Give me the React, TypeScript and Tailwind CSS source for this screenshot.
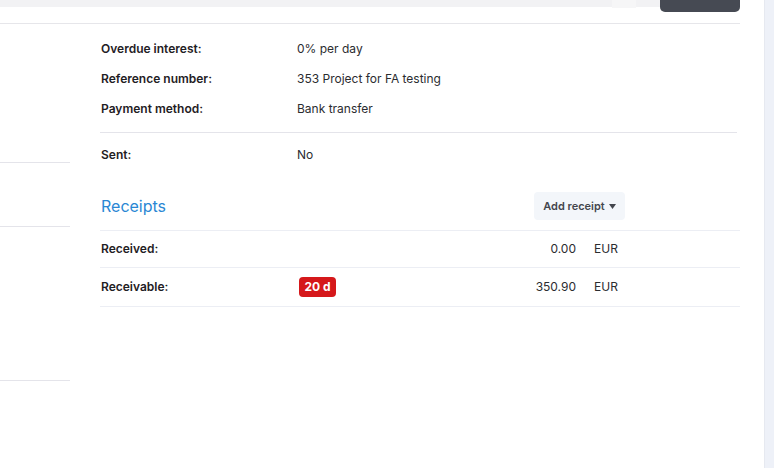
const details = [
  { label: "Overdue interest:", value: "0% per day" },
  { label: "Reference number:", value: "353 Project for FA testing" },
  { label: "Payment method:", value: "Bank transfer" },
];

function InfoRow({ label, value }: { label: string; value: string }) {
  return (
    <div className="flex h-[30px] items-center">
      <div className="w-[196px] shrink-0 font-semibold text-[#1f2024]">{label}</div>
      <div className="text-[#2b2c30]">{value}</div>
    </div>
  );
}

export default function App() {
  return (
    <div className="flex h-[468px] w-[774px] overflow-hidden bg-white font-['Inter','Liberation_Sans',sans-serif] text-[12px]">
      <div className="flex w-[764px] flex-col">
        <div className="flex h-[24px] w-[740px] items-start justify-end border-b border-[#e6e6ea] bg-[linear-gradient(#f2f2f4_0_7px,white_7px)]">
          <div className="mr-[24px] h-[8px] w-[24px] bg-[#f6f6f7]" />
          <div className="h-[12px] w-[80px] rounded-b-[5px] bg-[#464a53]" />
        </div>

        <div className="flex">
          <div className="w-[70px] shrink-0">
            <div className="h-[139px] border-b border-[#e4e4ea]" />
            <div className="h-[64px] border-b border-[#e4e4ea]" />
            <div className="h-[154px] border-b border-[#e4e4ea]" />
          </div>

          <div className="ml-[30px] w-[640px]">
            <div className="pt-[10px] pb-[8px] pl-[1px] mr-[3px] border-b border-[#e4e4ea]">
              {details.map((d) => (
                <InfoRow key={d.label} label={d.label} value={d.value} />
              ))}
            </div>
            <div className="pt-[7px] pl-[1px]">
              <InfoRow label="Sent:" value="No" />
            </div>

            <div className="pt-[22px] pb-[10px] border-b border-[#eceef4]">
              <div className="flex h-[28px] items-center justify-between pl-[1px] pr-[115px]">
                <h2 className="text-[16px] font-normal text-[#2a87d4]">Receipts</h2>
                <button className="flex h-[28px] w-[91px] items-center justify-center gap-[4px] rounded-[4px] bg-[#f3f6fa] text-[11px] font-semibold text-[#43464d]">
                  Add receipt
                  <svg width="7" height="5" viewBox="0 0 7 5">
                    <path d="M0 0h7L3.5 5z" fill="#43464d" />
                  </svg>
                </button>
              </div>
            </div>

            <div className="flex h-[37px] items-center border-b border-[#eceef4] pl-[1px] pr-[115px]">
              <div className="w-[196px] font-semibold text-[#1f2024]">Received:</div>
              <div className="flex-1" />
              <div className="text-right text-[#2b2c30]">0.00</div>
              <div className="ml-[18px] w-[31px] text-[#2b2c30]">EUR</div>
            </div>
            <div className="flex h-[39px] items-center border-b border-[#eceef4] pl-[1px] pr-[115px]">
              <div className="w-[198px] font-semibold text-[#1f2024]">Receivable:</div>
              <div className="flex-1">
                <span className="inline-flex h-[20px] items-center rounded-[4px] bg-[#d5181b] px-[5.5px] font-bold text-white">
                  20 d
                </span>
              </div>
              <div className="text-right text-[#2b2c30]">350.90</div>
              <div className="ml-[18px] w-[31px] text-[#2b2c30]">EUR</div>
            </div>
          </div>
        </div>
      </div>
      <div className="h-full w-[10px] border-l border-[#e6e9f0] bg-[#eef1f8]" />
    </div>
  );
}
